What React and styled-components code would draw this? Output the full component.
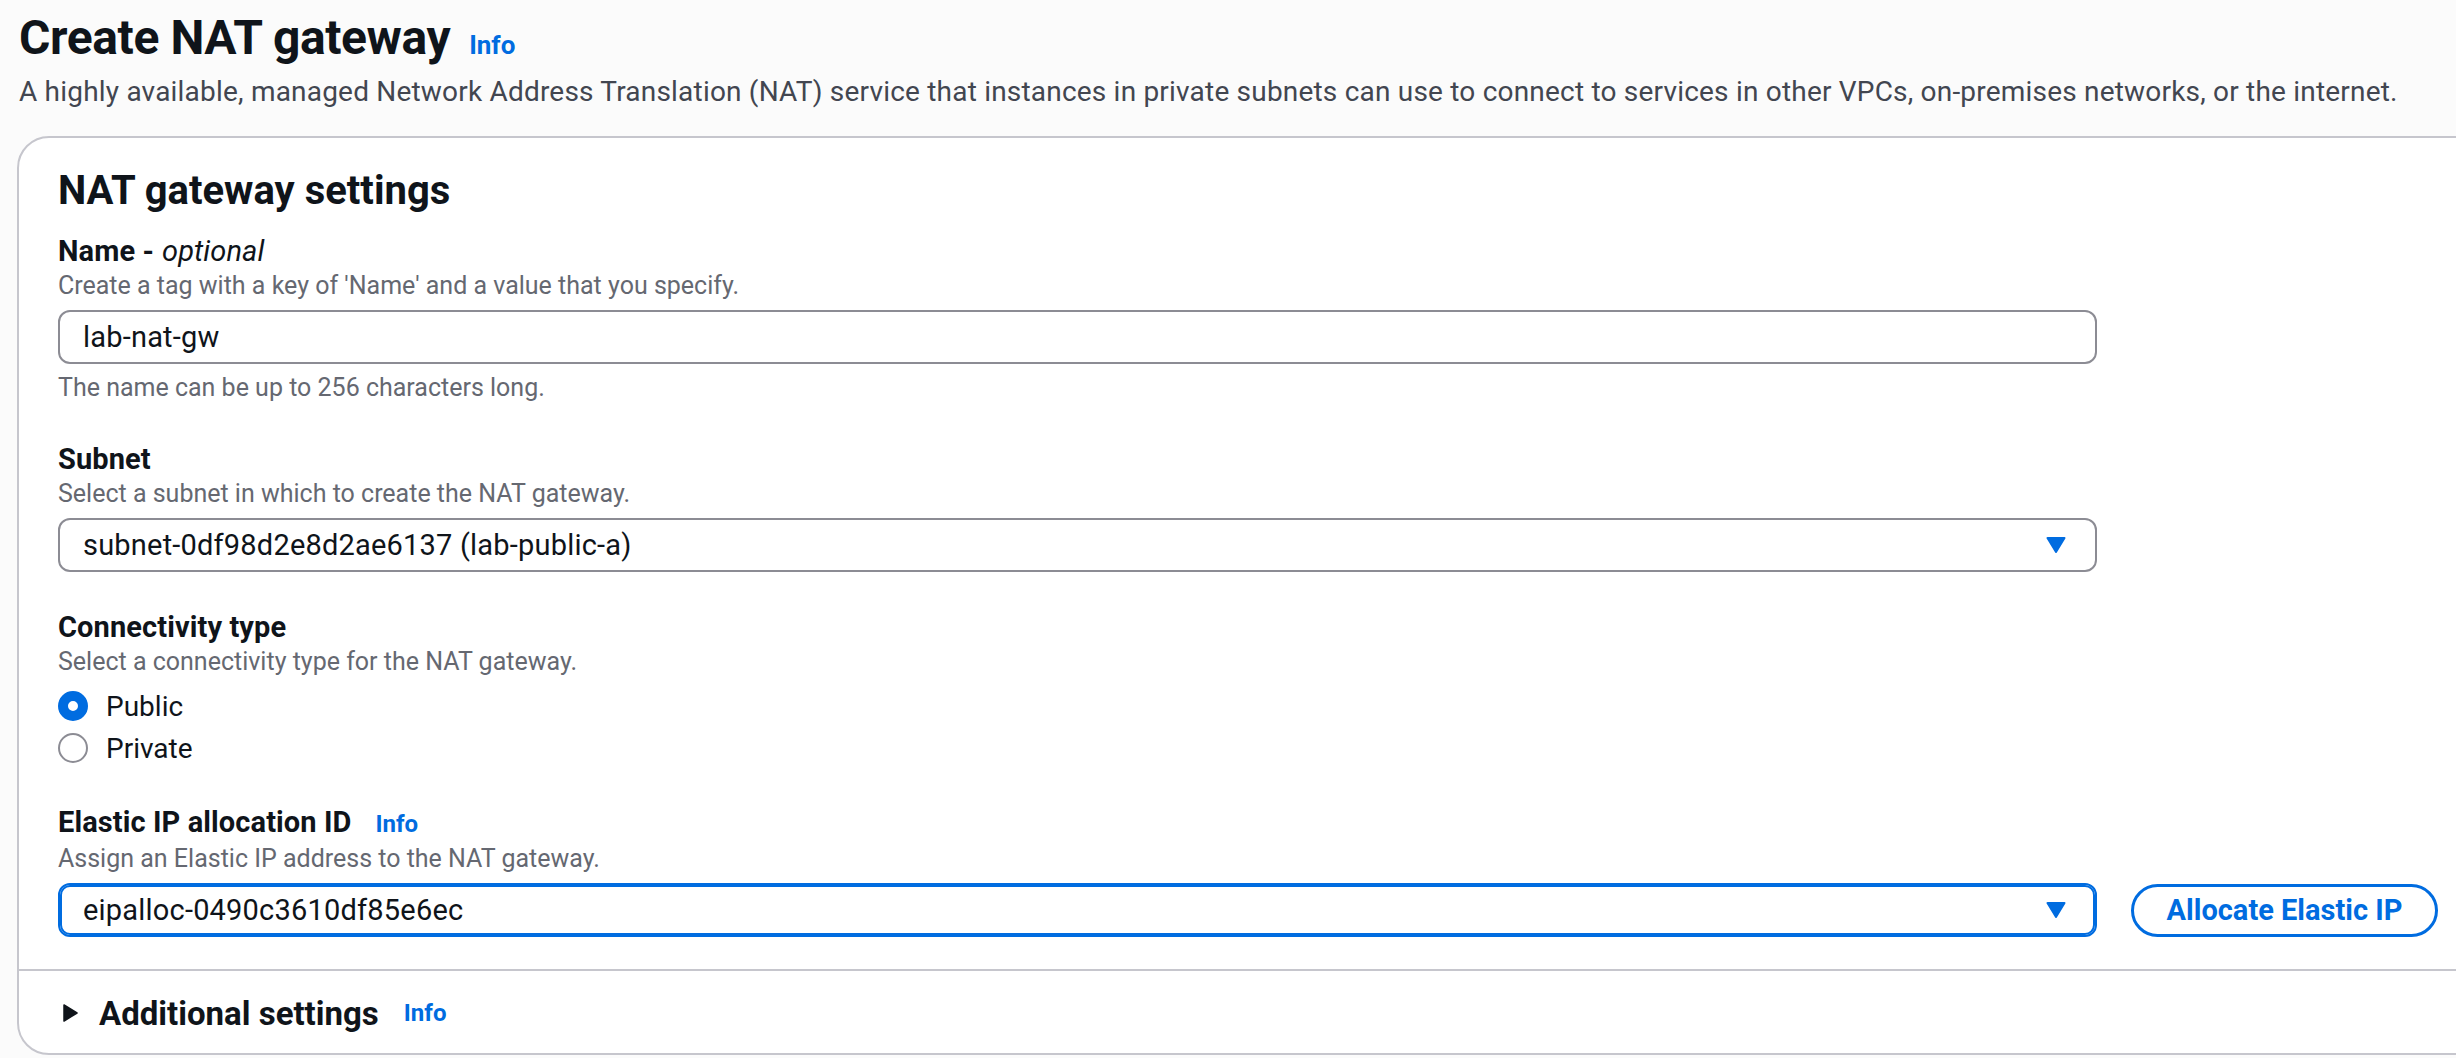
import React from "react";
import styled, { createGlobalStyle } from "styled-components";

const Global = createGlobalStyle`
  html, body { margin: 0; padding: 0; background: #fbfbfb; overflow: hidden; }
  body { font-family: Roboto, "Liberation Sans", sans-serif; color: #0f141a; }
  * { box-sizing: border-box; }
`;

const Page = styled.div`
  width: 2540px;
  padding: 10px 0 0 17px;
`;

const TitleRow = styled.div`
  display: flex;
  align-items: baseline;
  gap: 19px;
  padding-left: 2px;
`;

const Title = styled.h1`
  margin: 0;
  font-size: 48px;
  line-height: 56px;
  font-weight: 700;
  letter-spacing: -0.4px;
  color: #0f141a;
`;

const Info = styled.a`
  font-size: ${(p) => p.$size || 26}px;
  font-weight: 700;
  color: #006ce0;
  text-decoration: none;
  letter-spacing: 0;
  margin-left: ${(p) => p.$gap || 0}px;
`;

const PageDesc = styled.p`
  margin: 6px 0 0 2px;
  font-size: 28px;
  line-height: 40px;
  letter-spacing: 0.2px;
  color: #424650;
`;

const Panel = styled.section`
  margin-top: 24px;
  background: #fff;
  border: 2px solid #c6c6cd;
  border-radius: 32px;
`;

const PanelBody = styled.div`
  padding: 29px 39px 32px;
`;

const PanelTitle = styled.h2`
  margin: 0 0 16px;
  font-size: 40px;
  line-height: 48px;
  font-weight: 700;
  color: #0f141a;
`;

const Fields = styled.div`
  display: flex;
  flex-direction: column;
  gap: 35px;
`;

const Field = styled.div`
  display: flex;
  flex-direction: column;
`;

const Label = styled.div`
  display: flex;
  align-items: baseline;
  padding-top: 2px;
  font-size: 29px;
  line-height: 36px;
  font-weight: 700;
  letter-spacing: 0.1px;
  color: #0f141a;
`;

const Optional = styled.span`
  font-weight: 400;
  font-style: italic;
  margin-left: 8px;
`;

const Desc = styled.div`
  font-size: 25px;
  line-height: 34px;
  color: #656871;
`;

const Constraint = styled.div`
  margin-top: 8px;
  font-size: 25px;
  line-height: 32px;
  color: #656871;
`;

const ControlRow = styled.div`
  margin-top: 7px;
  display: flex;
  align-items: center;
  gap: 34px;
`;

const Box = styled.div`
  width: 2039px;
  height: 54px;
  display: flex;
  align-items: center;
  justify-content: space-between;
  padding: 0 29px 0 23px;
  border: 2px solid ${(p) => (p.$focused ? "#006ce0" : "#8c8c94")};
  box-shadow: ${(p) => (p.$focused ? "inset 0 0 0 2px #006ce0" : "none")};
  border-radius: 12px;
  background: #fff;
  font-size: 29px;
  letter-spacing: 0.2px;
  color: #0f141a;
`;

const Caret = styled.svg`
  width: 20px;
  height: 16px;
  flex: none;
`;

const OutlineButton = styled.button`
  width: 307px;
  height: 53px;
  border: 3px solid #006ce0;
  border-radius: 999px;
  background: #fff;
  color: #006ce0;
  font-family: inherit;
  font-size: 29px;
  font-weight: 700;
  padding: 0;
`;

const RadioGroup = styled.div`
  margin: 6px 0 -2px;
  display: flex;
  flex-direction: column;
`;

const RadioRow = styled.label`
  height: 42px;
  display: flex;
  align-items: center;
  gap: 18px;
  font-size: 28px;
  color: #0f141a;
`;

const RadioDot = styled.span`
  width: 30px;
  height: 30px;
  border-radius: 50%;
  flex: none;
  background: #fff;
  border: ${(p) => (p.$checked ? "10px solid #006ce0" : "2px solid #8c8c94")};
`;

const Footer = styled.div`
  border-top: 2px solid #c6c6cd;
  padding: 22px 39px 20px;
`;

const ExpandRow = styled.div`
  display: flex;
  align-items: center;
  height: 40px;
  padding-left: 5px;
`;

const ExpandIcon = styled.svg`
  width: 15px;
  height: 18px;
  margin-right: 21px;
  flex: none;
`;

const ExpandTitle = styled.span`
  font-size: 33px;
  font-weight: 700;
  color: #0f141a;
`;

function DownCaret() {
  return (
    <Caret viewBox="0 0 20 16">
      <path d="M1.5 1 H18.5 L10 15 Z" fill="#006ce0" stroke="#006ce0" strokeWidth="2" strokeLinejoin="round" />
    </Caret>
  );
}

export default function App() {
  return (
    <>
      <Global />
      <Page>
        <TitleRow>
          <Title>Create NAT gateway</Title>
          <Info>Info</Info>
        </TitleRow>
        <PageDesc>
          A highly available, managed Network Address Translation (NAT) service that instances in private subnets can use to connect to services in other VPCs, on-premises networks, or the internet.
        </PageDesc>
        <Panel>
          <PanelBody>
            <PanelTitle>NAT gateway settings</PanelTitle>
            <Fields>
              <Field>
                <Label>
                  Name -<Optional>optional</Optional>
                </Label>
                <Desc>Create a tag with a key of 'Name' and a value that you specify.</Desc>
                <ControlRow>
                  <Box>lab-nat-gw</Box>
                </ControlRow>
                <Constraint>The name can be up to 256 characters long.</Constraint>
              </Field>
              <Field>
                <Label>Subnet</Label>
                <Desc>Select a subnet in which to create the NAT gateway.</Desc>
                <ControlRow>
                  <Box>
                    <span>subnet-0df98d2e8d2ae6137 (lab-public-a)</span>
                    <DownCaret />
                  </Box>
                </ControlRow>
              </Field>
              <Field>
                <Label>Connectivity type</Label>
                <Desc>Select a connectivity type for the NAT gateway.</Desc>
                <RadioGroup>
                  <RadioRow>
                    <RadioDot $checked />
                    Public
                  </RadioRow>
                  <RadioRow>
                    <RadioDot />
                    Private
                  </RadioRow>
                </RadioGroup>
              </Field>
              <Field>
                <Label>
                  Elastic IP allocation ID
                  <Info $size={24} $gap={24}>Info</Info>
                </Label>
                <Desc>Assign an Elastic IP address to the NAT gateway.</Desc>
                <ControlRow>
                  <Box $focused>
                    <span>eipalloc-0490c3610df85e6ec</span>
                    <DownCaret />
                  </Box>
                  <OutlineButton>Allocate Elastic IP</OutlineButton>
                </ControlRow>
              </Field>
            </Fields>
          </PanelBody>
          <Footer>
            <ExpandRow>
              <ExpandIcon viewBox="0 0 15 18">
                <path d="M1 1 L14 9 L1 17 Z" fill="#0f141a" stroke="#0f141a" strokeWidth="1.5" strokeLinejoin="round" />
              </ExpandIcon>
              <ExpandTitle>Additional settings</ExpandTitle>
              <Info $size={24} $gap={25}>Info</Info>
            </ExpandRow>
          </Footer>
        </Panel>
      </Page>
    </>
  );
}
